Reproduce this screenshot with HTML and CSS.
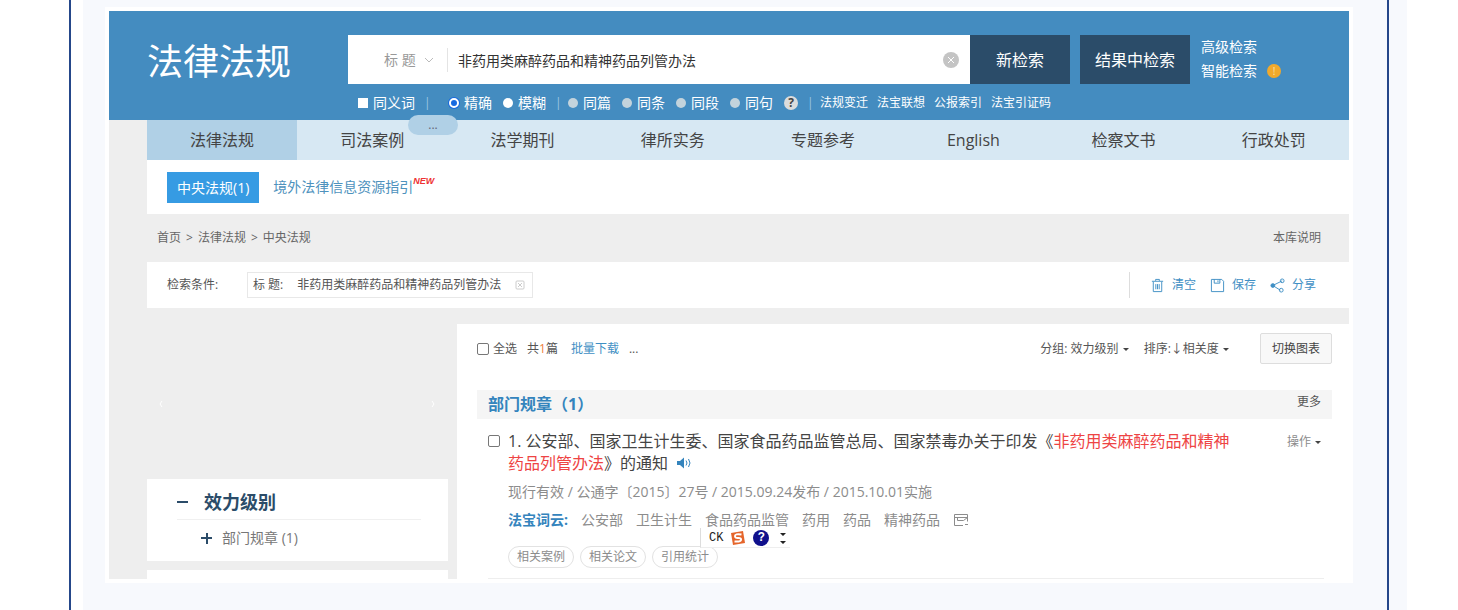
FILE: index.html
```html
<!DOCTYPE html>
<html lang="zh-CN">
    <head>
        <meta charset="UTF-8">
        <meta name="viewport" content="width=device-width, initial-scale=1.0">
        <title>法律法规</title>
        <link rel="stylesheet" href="styles.css">
    </head>
    <body>
        <div class="paper">
            <div class="card">
                <div class="site">
                    <header>
                        <h1 class="logo">法律法规</h1>
                        <form class="search">
                            <div class="search-row">
                                <div class="search-box">
                                    <select class="field" aria-label="检索字段">
                                        <option>标 题</option>
                                    </select>
                                    <svg class="arrow" viewBox="0 0 10 6"><path d="M1 1l4 4 4-4"/></svg>
                                    <input type="text" class="keyword" aria-label="关键词" value="非药用类麻醉药品和精神药品列管办法">
                                    <button type="button" class="clear" aria-label="清除">
                                        <svg viewBox="0 0 16 16"><circle cx="8" cy="8" r="8"/><path d="M5 5l6 6M11 5l-6 6"/></svg>
                                    </button>
                                </div>
                                <button type="button" class="btn-search">新检索</button>
                                <button type="button" class="btn-search btn-within">结果中检索</button>
                                <div class="more-search">
                                    <a href="#">高级检索</a>
                                    <a href="#">智能检索 <span class="badge">!</span></a>
                                </div>
                            </div>
                            <div class="options">
                                <label><input type="checkbox">同义词</label>
                                <span class="sep sep-wide">|</span>
                                <label><input type="radio" name="match" checked>精确</label>
                                <label><input type="radio" name="match">模糊</label>
                                <span class="sep">|</span>
                                <label><input type="radio" name="range" disabled>同篇</label>
                                <label><input type="radio" name="range" disabled>同条</label>
                                <label><input type="radio" name="range" disabled>同段</label>
                                <label><input type="radio" name="range" disabled>同句</label>
                                <span class="help">?</span>
                                <span class="sep">|</span>
                                <a href="#">法规变迁</a>
                                <a href="#">法宝联想</a>
                                <a href="#">公报索引</a>
                                <a href="#">法宝引证码</a>
                            </div>
                        </form>
                        <button type="button" class="handle">...</button>
                    </header>

                    <main>
                        <nav class="menu">
                            <a href="#" class="active">法律法规</a>
                            <a href="#">司法案例</a>
                            <a href="#">法学期刊</a>
                            <a href="#">律所实务</a>
                            <a href="#">专题参考</a>
                            <a href="#">English</a>
                            <a href="#">检察文书</a>
                            <a href="#">行政处罚</a>
                        </nav>
                        <div class="tabs">
                            <a href="#" class="tab">中央法规(1)</a>
                            <a href="#" class="tab-link">境外法律信息资源指引</a>
                            <span class="new">NEW</span>
                        </div>
                        <div class="crumbs">
                            <div class="path">
                                <a href="#">首页</a><span>&gt;</span><a href="#">法律法规</a><span>&gt;</span><a href="#">中央法规</a>
                            </div>
                            <a href="#">本库说明</a>
                        </div>
                        <div class="conditions">
                            <span class="cond-label">检索条件:</span>
                            <div class="chip">
                                <span>标 题:</span>
                                <span>非药用类麻醉药品和精神药品列管办法</span>
                                <button type="button" aria-label="移除">
                                    <svg viewBox="0 0 10 10"><rect x="1" y="1" width="8" height="8" rx="1"/><path d="M3 3l4 4M7 3l-4 4"/></svg>
                                </button>
                            </div>
                            <div class="tools">
                                <a href="#">
                                    <svg viewBox="0 0 16 16"><path d="M2 3.500h12M6 3V1.500h4V3M3.500 4v10.500h9V4M6.200 6.500v5.500M8 6.500v5.500M9.800 6.500v5.500"/></svg>
                                    清空
                                </a>
                                <a href="#">
                                    <svg viewBox="0 0 16 16"><path d="M1.500 1.500h11l2 2v11h-13zM4.500 1.500v4h6v-4M8.500 2.500v2"/></svg>
                                    保存
                                </a>
                                <a href="#">
                                    <svg viewBox="0 0 16 16"><path d="M13 3L3 8l8 5"/><circle cx="13" cy="3" r="2"/><circle class="dot" cx="3" cy="8" r="2"/><circle cx="12" cy="13" r="2"/></svg>
                                    分享
                                </a>
                            </div>
                        </div>

                        <div class="columns">
                            <aside>
                                <div class="slider">
                                    <svg viewBox="0 0 4 8"><path d="M3 1L1 4l2 3"/></svg>
                                    <svg viewBox="0 0 4 8"><path d="M1 1l2 3-2 3"/></svg>
                                </div>
                                <div class="group">
                                    <h2><span class="sign minus"></span>效力级别</h2>
                                    <a href="#"><span class="sign plus"></span>部门规章 (1)</a>
                                </div>
                                <div class="group-next"></div>
                            </aside>

                            <section class="results">
                                <div class="toolbar">
                                    <label><input type="checkbox">全选</label>
                                    <span class="total">共<em>1</em>篇</span>
                                    <a href="#">批量下载</a>
                                    <span class="dots">...</span>
                                    <div class="sort">
                                        <span>分组: 效力级别 <i class="caret"></i></span>
                                        <span>排序:↓相关度 <i class="caret"></i></span>
                                        <button type="button">切换图表</button>
                                    </div>
                                </div>
                                <div class="section-title">
                                    <h3>部门规章（1）</h3>
                                    <a href="#">更多</a>
                                </div>
                                <article>
                                    <input type="checkbox" aria-label="选择">
                                    <div class="article-body">
                                        <h4><a href="#">1. 公安部、国家卫生计生委、国家食品药品监管总局、国家禁毒办关于印发《<mark>非药用类麻醉药品和精神药品列管办法</mark>》的通知</a>
                                            <svg class="sound" viewBox="0 0 16 12"><path d="M1 4h3l4-3.500v11L4 8H1z"/><path class="wave" d="M10 3.500q2 2.500 0 5M12.500 2q3 4 0 8"/></svg>
                                        </h4>
                                        <p class="meta">现行有效 / 公通字〔2015〕27号 / 2015.09.24发布 / 2015.10.01实施</p>
                                        <div class="cloud">
                                            <strong>法宝词云:</strong>
                                            <a href="#">公安部</a>
                                            <a href="#">卫生计生</a>
                                            <a href="#">食品药品监管</a>
                                            <a href="#">药用</a>
                                            <a href="#">药品</a>
                                            <a href="#">精神药品</a>
                                            <svg viewBox="0 0 16 14"><path d="M10 12.500H1.500v-11h13v7M1.500 4.500h13M4.500 4.500v3h6l4-3M12 11.500h3"/></svg>
                                            <!-- 输入法状态条 -->
                                            <div class="ime">
                                                <span>CK</span>
                                                <svg viewBox="0 0 16 16"><path class="s-box" d="M1 3l12-2 2 12-12 2z"/><path class="s-line" d="M11.500 4.500Q5 3.500 5 6t3.500 2q3 0 2.500 2t-6.500 1.500"/></svg>
                                                <span class="ime-help">?</span>
                                                <svg class="ime-more" viewBox="0 0 6 12"><path d="M0 1h6L3 4zM0 9h6L3 12z"/></svg>
                                            </div>
                                        </div>
                                        <div class="pills">
                                            <a href="#">相关案例</a>
                                            <a href="#">相关论文</a>
                                            <a href="#">引用统计</a>
                                        </div>
                                    </div>
                                    <a href="#" class="action">操作 <i class="caret"></i></a>
                                </article>
                            </section>
                        </div>
                    </main>
                </div>
            </div>
        </div>
    </body>
</html>
```

FILE: styles.css
```css
* {
    box-sizing: border-box;
}

body {
    margin: 0;
    background-color: #fff;
    color: #555;
    font-family: "Open Sans", "Noto Sans CJK SC", sans-serif;
    font-size: 12px;
    line-height: 20px;
}

a {
    color: inherit;
    text-decoration: none;
}

h1, h2, h3, h4, p {
    margin: 0;
}

button, input, select {
    margin: 0;
    padding: 0;
    border: none;
    background: none;
    font: inherit;
    color: inherit;
}

button {
    cursor: pointer;
}

svg {
    display: block;
    flex: none;
    fill: none;
    stroke: currentColor;
}

/* outer page with the two vertical rules */
.paper {
    position: relative;
    min-height: 100vh;
    margin: 0 51px 0 83px;
    padding: 7px 54px 27px 22px;
    background-color: #f7f9fd;
}

.paper::before,
.paper::after {
    content: "";
    position: absolute;
    top: 0;
    bottom: 0;
    width: 2px;
    background-color: #25478a;
}

.paper::before {
    left: -14px;
}

.paper::after {
    right: 18px;
}

.card {
    padding: 4px;
    background-color: #fff;
}

.site {
    background-color: #eee;
}

/* header */
header {
    position: relative;
    display: flex;
    padding: 24px 0 0 38px;
    background-color: #448cc0;
    color: #fff;
}

.logo {
    width: 201px;
    font-size: 36px;
    font-weight: normal;
    line-height: 53px;
}

.search {
    flex: 1;
}

.search-row {
    display: flex;
    height: 49px;
}

.search-box {
    flex: 1;
    display: flex;
    align-items: center;
    padding: 0 11px 0 36px;
    background-color: #fff;
}

.field {
    width: 40px;
    appearance: none;
    color: #999;
    font-size: 14px;
}

.arrow {
    width: 10px;
    height: 6px;
    color: #bbb;
}

.keyword {
    flex: 1;
    min-width: 0;
    height: 24px;
    margin-left: 13px;
    padding-left: 10px;
    border-left: 1px solid #e4e4e4;
    color: #333;
    font-size: 14px;
}

.clear svg {
    width: 16px;
    height: 16px;
    fill: #c4c4c4;
    stroke: none;
}

.clear path {
    stroke: #fff;
}

.btn-search {
    width: 100px;
    background-color: #2b4c69;
    font-size: 16px;
}

.btn-within {
    width: 110px;
    margin-left: 10px;
}

.more-search {
    width: 159px;
    padding-left: 11px;
    font-size: 14px;
    line-height: 24px;
}

.more-search a {
    display: flex;
    align-items: center;
    gap: 10px;
}

.badge {
    width: 14px;
    height: 14px;
    border-radius: 7px;
    background-color: #f0a92c;
    color: #fbe3a8;
    font-size: 10px;
    line-height: 14px;
    text-align: center;
}

.options {
    display: flex;
    align-items: center;
    height: 36px;
    padding: 2px 0 0 10px;
    gap: 9px;
}

.options label {
    display: flex;
    align-items: center;
    gap: 5px;
    margin-right: 2px;
    font-size: 14px;
}

.options input {
    appearance: none;
    width: 10px;
    height: 10px;
    background-color: #fff;
}

.options input[type="radio"] {
    border-radius: 5px;
}

.options input:checked {
    border: 2px solid #fff;
    background-color: #1769e0;
    box-shadow: 0 0 0 1px #1769e0;
}

.options input:disabled {
    background-color: #c3d3dc;
}

.sep {
    width: 4px;
    color: #9cc5e0;
    text-align: center;
}

.options label + .sep {
    margin-left: -2px;
}

.options .sep-wide {
    margin-right: 12px;
}

.help {
    width: 14px;
    height: 14px;
    border-radius: 7px;
    background-color: #dcdcdc;
    color: #444;
    font-weight: bold;
    line-height: 14px;
    text-align: center;
}

.handle {
    position: absolute;
    left: 299px;
    bottom: -15px;
    width: 50px;
    height: 20px;
    border-radius: 10px;
    background-color: #b0d0e6;
    color: #667;
    line-height: 18px;
}

main {
    margin-left: 38px;
}

.menu {
    display: flex;
    background-color: #d7e8f3;
    color: #444;
    font-size: 16px;
    line-height: 40px;
}

.menu a {
    flex: 1;
    text-align: center;
}

.menu .active {
    background-color: #b0d0e6;
}

.tabs {
    display: flex;
    align-items: center;
    height: 54px;
    padding-left: 20px;
    background-color: #fff;
    font-size: 14px;
}

.tab {
    padding: 0 10px;
    background-color: #369be3;
    color: #fff;
    line-height: 31px;
}

.tab-link {
    margin-left: 14px;
    color: #4e92bd;
}

.new {
    align-self: flex-start;
    margin-top: 11px;
    color: #e33;
    font: italic bold 9px/20px "Liberation Sans", sans-serif;
}

.crumbs {
    display: flex;
    justify-content: space-between;
    align-items: center;
    height: 48px;
    padding: 0 28px 0 10px;
    color: #666;
}

.path {
    display: flex;
    gap: 5px;
}

.conditions {
    display: flex;
    align-items: center;
    height: 46px;
    padding: 0 33px 0 20px;
    background-color: #fff;
}

.cond-label {
    width: 80px;
}

.chip {
    display: flex;
    align-items: center;
    gap: 14px;
    height: 26px;
    padding: 0 7px 0 5px;
    border: 1px solid #e8e8e8;
}

.chip svg {
    width: 10px;
    height: 10px;
    color: #ccc;
}

.tools {
    display: flex;
    align-items: center;
    gap: 14px;
    height: 26px;
    margin-left: auto;
    padding-left: 20px;
    border-left: 1px solid #ddd;
    color: #3f8fc4;
}

.tools a {
    display: flex;
    align-items: center;
    gap: 7px;
}

.tools svg {
    width: 15px;
    height: 15px;
}

.tools .dot {
    fill: currentColor;
}

.columns {
    display: flex;
    gap: 9px;
    margin-top: 16px;
}

/* left column */
aside {
    display: flex;
    flex-direction: column;
    width: 301px;
}

.slider {
    display: flex;
    justify-content: space-between;
    align-items: center;
    height: 155px;
    padding: 4px 13px 0 12px;
}

.slider svg {
    width: 4px;
    height: 8px;
    color: #fff;
}

.group {
    padding: 6px 27px 5px 30px;
    background-color: #fff;
}

.group h2 {
    display: flex;
    align-items: center;
    color: #2b4c69;
    font-size: 18px;
    line-height: 34px;
    border-bottom: 1px solid #f0f0f0;
}

.group a {
    display: flex;
    align-items: center;
    margin-left: 24px;
    color: #777;
    font-size: 14px;
    line-height: 36px;
}

.sign {
    width: 11px;
    height: 11px;
    background: linear-gradient(#2b4c69, #2b4c69) center / 11px 2px no-repeat;
}

.minus {
    margin-right: 16px;
}

.plus {
    margin-right: 10px;
    background: linear-gradient(#2b4c69, #2b4c69) center / 11px 2px no-repeat,
        linear-gradient(#2b4c69, #2b4c69) center / 2px 11px no-repeat;
}

.group-next {
    flex: 1;
    margin-top: 9px;
    background-color: #fff;
}

/* results */
.results {
    flex: 1;
    padding: 9px 17px 0 20px;
    background-color: #fff;
}

.toolbar {
    display: flex;
    align-items: center;
}

.toolbar label {
    display: flex;
    align-items: center;
    gap: 4px;
}

.results input {
    appearance: none;
    width: 12px;
    height: 12px;
    border: 1px solid #777;
    border-radius: 2px;
}

.total {
    margin: 0 13px 0 10px;
}

.total em {
    color: #f08040;
    font-style: normal;
}

.toolbar a {
    color: #3f8fc4;
}

.dots {
    margin-left: 10px;
}

.sort {
    display: flex;
    align-items: center;
    gap: 15px;
    margin-left: auto;
}

.sort button {
    height: 31px;
    margin-left: 16px;
    padding: 0 11px;
    border: 1px solid #ddd;
    border-radius: 2px;
    background-color: #f8f8f8;
    color: #444;
}

.caret {
    display: inline-block;
    margin-left: 1px;
    border: 3px solid transparent;
    border-top-color: #444;
    border-bottom: none;
    vertical-align: middle;
}

.section-title {
    display: flex;
    justify-content: space-between;
    margin-top: 26px;
    padding: 0 11px;
    background-color: #f5f5f5;
}

.section-title h3 {
    color: #3484bd;
    font-size: 16px;
    line-height: 29px;
}

.section-title a {
    line-height: 24px;
}

article {
    display: flex;
    align-items: flex-start;
    margin: 0 8px 0 11px;
    padding: 11px 3px 10px 0;
    border-bottom: 1px solid #eee;
}

article > input {
    margin-top: 5px;
}

.article-body {
    flex: 1;
    margin: 0 46px 0 8px;
}

h4 {
    color: #444;
    font-size: 16px;
    font-weight: normal;
    line-height: 22px;
}

mark {
    background: none;
    color: #e44;
}

.sound {
    display: inline-block;
    width: 16px;
    height: 12px;
    margin-left: 4px;
    color: #3484bd;
    fill: #3484bd;
    stroke: none;
}

.sound .wave {
    fill: none;
    stroke: #3484bd;
}

.meta {
    margin-top: 4px;
    color: #8c8c8c;
    font-size: 14px;
    line-height: 28px;
}

.cloud {
    position: relative;
    display: flex;
    align-items: center;
    gap: 13px;
    color: #8c8c8c;
    font-size: 14px;
    line-height: 28px;
}

.cloud strong {
    color: #3484bd;
}

.cloud > svg {
    width: 16px;
    height: 14px;
}

.ime {
    position: absolute;
    left: 192px;
    top: 22px;
    display: flex;
    align-items: center;
    gap: 7px;
    width: 90px;
    height: 20px;
    padding-left: 8px;
    border-left: 1px solid #ddd;
    border-bottom: 1px solid #eee;
    background-color: #fff;
    color: #222;
    font: 12px/20px "Liberation Mono", monospace;
}

.ime svg {
    width: 16px;
    height: 16px;
}

.s-box {
    fill: #e5652b;
    stroke: none;
}

.s-line {
    stroke: #fff;
    stroke-width: 2;
}

.ime-help {
    width: 16px;
    height: 16px;
    border-radius: 8px;
    background-color: #10108c;
    color: #fff;
    font-weight: bold;
    line-height: 16px;
    text-align: center;
}

.ime .ime-more {
    width: 6px;
    height: 12px;
    margin-left: 4px;
    fill: #222;
    stroke: none;
}

.pills {
    display: flex;
    gap: 6px;
    margin-top: 12px;
}

.pills a {
    padding: 0 8px;
    border: 1px solid #e2e2e2;
    border-radius: 11px;
    color: #8c8c8c;
}

.action {
    color: #8c8c8c;
    line-height: 24px;
}
```
